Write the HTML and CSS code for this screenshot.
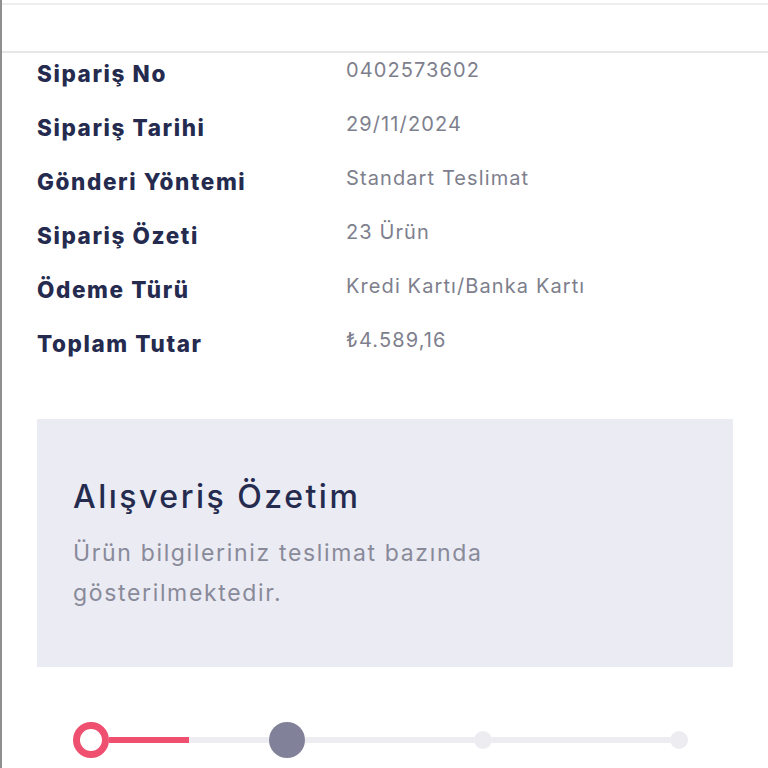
FILE: index.html
```html
<!DOCTYPE html>
<html lang="tr">
<head>
<meta charset="utf-8">
<title>Sipariş Detayı</title>
<link rel="stylesheet" href="styles.css">
</head>
<body>
<div class="page">
  <div class="topcut"></div>
  <div class="header"></div>
  <div class="details">
    <div class="row"><div class="label">Sipariş No</div><div class="value">0402573602</div></div>
    <div class="row"><div class="label">Sipariş Tarihi</div><div class="value">29/11/2024</div></div>
    <div class="row"><div class="label">Gönderi Yöntemi</div><div class="value">Standart Teslimat</div></div>
    <div class="row"><div class="label">Sipariş Özeti</div><div class="value">23 Ürün</div></div>
    <div class="row"><div class="label">Ödeme Türü</div><div class="value">Kredi Kartı/Banka Kartı</div></div>
    <div class="row"><div class="label">Toplam Tutar</div><div class="value">₺4.589,16</div></div>
  </div>
  <div class="summary">
    <h2 class="summary-title">Alışveriş Özetim</h2>
    <p class="summary-text">Ürün bilgileriniz teslimat bazında gösterilmektedir.</p>
  </div>
  <div class="progress">
    <span class="step step-active"></span>
    <span class="seg seg-red"></span>
    <span class="seg seg-gray seg-short"></span>
    <span class="step step-current"></span>
    <span class="seg seg-gray seg-long1"></span>
    <span class="step step-small"></span>
    <span class="seg seg-gray seg-long2"></span>
    <span class="step step-small"></span>
  </div>
</div>
</body>
</html>
```

FILE: styles.css
```css
html, body {
  margin: 0;
  padding: 0;
  background: #ffffff;
}
body {
  font-family: Inter, "Noto Sans", sans-serif;
}
.page {
  width: 766px;
  height: 768px;
  border-left: 2px solid #8f8f8f;
  overflow: hidden;
}
.topcut {
  height: 3px;
}
.header {
  height: 46px;
  border-top: 2px solid #eeeeee;
  border-bottom: 2px solid #e6e6e6;
}
.details {
  padding-left: 35px;
}
.row {
  display: grid;
  grid-template-columns: 309px 1fr;
  height: 54px;
  align-items: start;
}
.label {
  padding-top: 4px;
  line-height: 34px;
  font-size: 22.5px;
  font-weight: 800;
  color: #252b4f;
  letter-spacing: 1.6px;
}
.value {
  line-height: 34px;
  font-size: 20px;
  font-weight: 400;
  color: #7e7f8d;
  letter-spacing: 1.1px;
}
.summary {
  margin: 42px 0 0 35px;
  width: 696px;
  height: 248px;
  box-sizing: border-box;
  padding: 58px 36px 0 36px;
  background: #ebebf3;
}
.summary-title {
  margin: 0;
  font-size: 32px;
  line-height: 40px;
  font-weight: 500;
  color: #252b4f;
  letter-spacing: 2.5px;
}
.summary-text {
  margin: 16px 0 0 0;
  width: 470px;
  font-size: 23px;
  line-height: 40px;
  color: #898a99;
  letter-spacing: 1.65px;
}
.progress {
  margin: 53px 0 0 71px;
  height: 40px;
  display: flex;
  align-items: center;
}
.step {
  flex: none;
  border-radius: 50%;
  box-sizing: border-box;
}
.step-active {
  width: 36px;
  height: 36px;
  border: 7px solid #f0506f;
  background: #ffffff;
}
.step-current {
  width: 36px;
  height: 36px;
  background: #818199;
}
.step-small {
  width: 18px;
  height: 18px;
  background: #ececf1;
}
.seg {
  flex: none;
  height: 6px;
}
.seg-red {
  width: 80px;
  background: #f0506f;
}
.seg-gray {
  background: #ececf1;
}
.seg-short {
  width: 80px;
}
.seg-long1 {
  width: 169px;
}
.seg-long2 {
  width: 178px;
}
```
